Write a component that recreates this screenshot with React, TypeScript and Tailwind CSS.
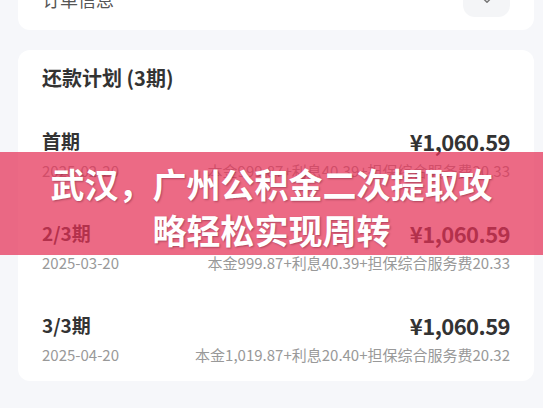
import React from "react";
import { ChevronDown } from "lucide-react";

type Plan = {
  label: string;
  date: string;
  amount: string;
  detail: string;
};

const plans: Plan[] = [
  { label: "首期", date: "2025-02-20", amount: "¥1,060.59", detail: "本金999.87+利息40.39+担保综合服务费20.33" },
  { label: "2/3期", date: "2025-03-20", amount: "¥1,060.59", detail: "本金999.87+利息40.39+担保综合服务费20.33" },
  { label: "3/3期", date: "2025-04-20", amount: "¥1,060.59", detail: "本金1,019.87+利息20.40+担保综合服务费20.32" },
];

export default function App() {
  return (
    <div
      className="relative w-[543px] h-[408px] overflow-hidden bg-[#f6f7fa] text-[#333]"
      style={{ fontFamily: '"Noto Sans CJK SC", "Noto Sans", sans-serif' }}
    >
      {/* order info card, mostly scrolled off the top */}
      <div className="ml-[18px] w-[516px] -mt-[28px] h-[58px] bg-white rounded-b-xl flex items-center justify-between pl-6 pr-6 pb-1">
        <span className="text-[18px] text-[#555]">订单信息</span>
        <div className="w-[47px] h-[36px] rounded-xl bg-[#f4f5f7] flex items-end justify-center pb-[8px]">
          <ChevronDown className="w-[18px] h-[18px] text-[#777]" strokeWidth={2} />
        </div>
      </div>

      {/* repayment plan card */}
      <div className="ml-[18px] w-[516px] mt-[20px] bg-white rounded-xl px-6 pt-[14px] pb-[15px]">
        <h2 className="text-[20px] leading-[28px] font-bold">还款计划 (3期)</h2>
        <div className="mt-[35px] flex flex-col gap-[37px]">
          {plans.map((p) => (
            <div key={p.label} className="flex flex-col">
              <div className="flex items-center justify-between h-[28px]">
                <span className="text-[19px] font-bold">{p.label}</span>
                <span className="text-[22px] font-bold tracking-tight">{p.amount}</span>
              </div>
              <div className="mt-[5px] flex items-center justify-between h-[22px] text-[15px] text-[#999]">
                <span>{p.date}</span>
                <span>{p.detail}</span>
              </div>
            </div>
          ))}
        </div>
      </div>

      {/* title banner over the screenshot */}
      <div className="absolute left-0 right-0 top-[152px] h-[103px] bg-[#e53056]/[0.72] flex items-center justify-center">
        <p
          className="text-white text-[34px] leading-[46px] font-bold text-center w-[460px] mt-[6px]"
          style={{ textShadow: "1px 1px 2px rgba(60,0,20,0.35)" }}
        >
          武汉，广州公积金二次提取攻
          <br />
          略轻松实现周转
        </p>
      </div>
    </div>
  );
}
